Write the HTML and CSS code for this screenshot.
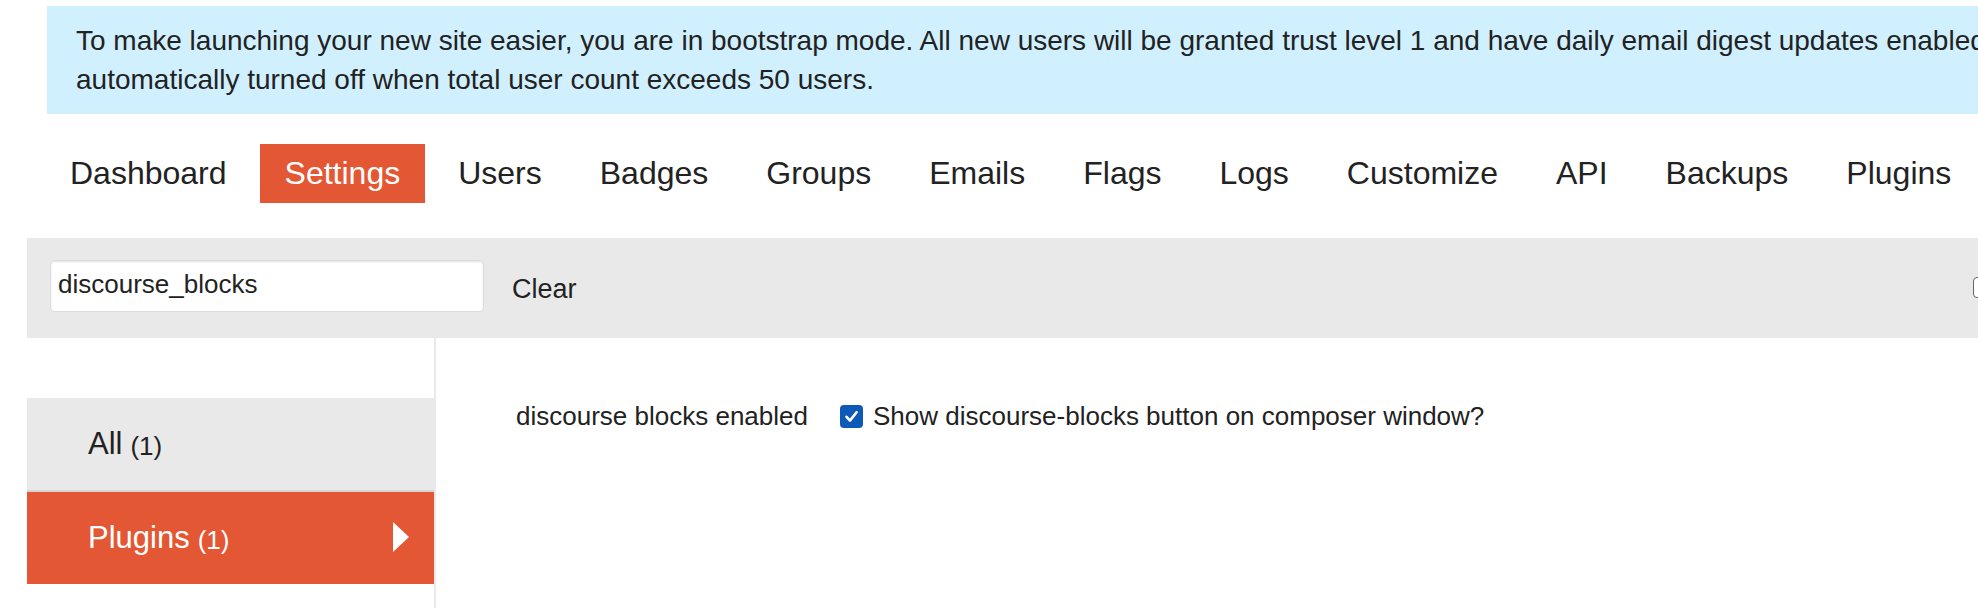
FILE: index.html
```html
<!DOCTYPE html>
<html>
<head>
<meta charset="utf-8">
<link rel="stylesheet" href="styles.css">
</head>
<body>
<div class="page">
  <div class="banner">
    <span class="line">To make launching your new site easier, you are in bootstrap mode. All new users will be granted trust level 1 and have daily email digest updates enabled. This will be</span><br>
    <span class="line">automatically turned off when total user count exceeds 50 users.</span>
  </div>

  <ul class="nav">
    <li class="nav-item">Dashboard</li>
    <li class="nav-item active">Settings</li>
    <li class="nav-item">Users</li>
    <li class="nav-item">Badges</li>
    <li class="nav-item">Groups</li>
    <li class="nav-item">Emails</li>
    <li class="nav-item">Flags</li>
    <li class="nav-item">Logs</li>
    <li class="nav-item">Customize</li>
    <li class="nav-item">API</li>
    <li class="nav-item">Backups</li>
    <li class="nav-item">Plugins</li>
  </ul>

  <div class="filter-bar">
    <div class="search">discourse_blocks</div>
    <div class="clear">Clear</div>
    <div class="overridden">
      <span class="small-box"></span>
    </div>
  </div>

  <div class="main">
    <div class="sidebar">
      <div class="cat cat-all">All <span class="count">(1)</span></div>
      <div class="cat cat-active">Plugins <span class="count">(1)</span><span class="arrow"></span></div>
    </div>
    <div class="content">
      <div class="setting">
        <div class="setting-name">discourse blocks enabled</div>
        <div class="setting-value">
          <span class="checkbox">
            <svg width="23" height="23" viewBox="0 0 23 23"><path d="M6.5 11.8 L10 15.6 L16.6 7.2" fill="none" stroke="#fff" stroke-width="2.6" stroke-linecap="round" stroke-linejoin="round"/></svg>
          </span>
          <span class="setting-desc">Show discourse-blocks button on composer window?</span>
        </div>
      </div>
    </div>
  </div>
</div>
</body>
</html>
```

FILE: styles.css
```css
html, body {
  margin: 0;
  padding: 0;
  background: #fff;
  overflow: hidden;
}

body {
  font-family: "Liberation Sans", Arial, Helvetica, sans-serif;
  color: #222;
}

.page {
  width: 2400px;
  padding-left: 27px;
  padding-top: 6px;
  box-sizing: border-box;
}

.banner {
  margin-left: 20px;
  background: #d1f0ff;
  padding: 15px 28px 15px 29px;
  font-size: 28px;
  line-height: 39px;
  height: 78px;
  white-space: nowrap;
  color: #222;
}

.nav {
  list-style: none;
  margin: 30px 0 0 18px;
  padding: 0;
  display: flex;
  gap: 8px;
}

.nav-item {
  font-size: 32px;
  line-height: 35px;
  padding: 12px 25px;
  color: #222;
}

.nav-item.active {
  background: #e45735;
  color: #fff;
}

.filter-bar {
  margin-top: 35px;
  width: 2246px;
  height: 100px;
  box-sizing: border-box;
  background: #e9e9e9;
  display: flex;
  align-items: flex-start;
  padding: 22px 0 0 23px;
}

.search {
  width: 434px;
  height: 52px;
  box-sizing: border-box;
  background: #fff;
  border: 1px solid #dcdcdc;
  border-radius: 4px;
  box-shadow: inset 0 1px 2px rgba(0,0,0,0.12);
  font-size: 26px;
  line-height: 46px;
  padding: 0 7px;
  color: #222;
}

.clear {
  margin-left: 28px;
  font-size: 27px;
  line-height: 30px;
  margin-top: 14px;
  color: #222;
}

.overridden {
  margin-left: auto;
  width: 300px;
  display: flex;
  align-items: center;
  margin-top: 17px;
}

.small-box {
  width: 21px;
  height: 21px;
  box-sizing: border-box;
  border: 1.5px solid #666;
  border-radius: 4px;
  background: #fff;
}

.main {
  display: flex;
  align-items: stretch;
  height: 300px;
}

.sidebar {
  width: 407px;
  padding-top: 60px;
  border-right: 2px solid #e9e9e9;
}

.cat {
  height: 92px;
  box-sizing: border-box;
  padding-left: 61px;
  display: flex;
  align-items: center;
  font-size: 31px;
  position: relative;
}

.cat .count {
  font-size: 26px;
  margin-left: 8px;
  padding-top: 4px;
}

.cat-all {
  height: 94px;
  background: #e9e9e9;
  color: #222;
  border-bottom: 2px solid #d6d6d6;
}

.cat-active {
  background: #e45735;
  color: #fff;
}

.arrow {
  position: absolute;
  left: 366px;
  top: 30px;
  width: 0;
  height: 0;
  border-left: 16px solid #fff;
  border-top: 15.5px solid transparent;
  border-bottom: 15.5px solid transparent;
}

.content {
  padding-left: 80px;
  padding-top: 60px;
}

.setting {
  display: flex;
  align-items: center;
  height: 36px;
}

.setting-name {
  font-size: 26px;
  width: 324px;
}

.setting-value {
  display: flex;
  align-items: center;
}

.checkbox {
  width: 23px;
  height: 23px;
  border-radius: 4px;
  background: #0d59b8;
  display: inline-block;
  margin-right: 10px;
}

.checkbox svg {
  display: block;
}

.setting-desc {
  font-size: 26px;
}
```
